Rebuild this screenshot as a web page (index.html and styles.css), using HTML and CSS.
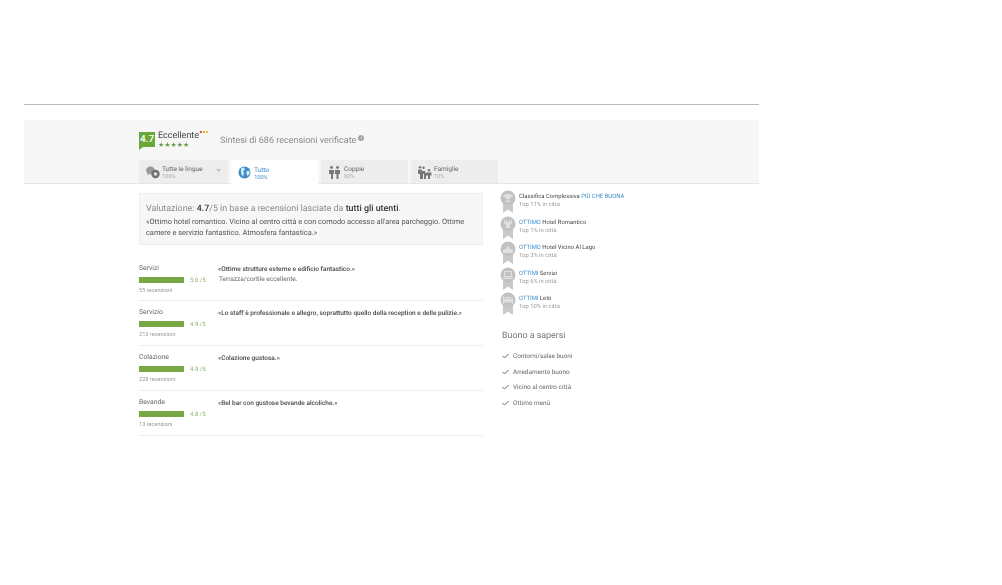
FILE: index.html
```html
<!DOCTYPE html>
<html lang="it">
<head>
    <meta charset="UTF-8" />
    <title>Recensioni</title>
    <link rel="stylesheet" href="styles.css">
</head>
<body>
<svg class="defs" width="0" height="0">
    <symbol id="ribbon" viewBox="0 0 16 23">
        <path d="M3 11 L3 23 L8 19.500 L13 23 L13 11 Z" fill="#c9c9c9"/>
        <circle cx="8" cy="8" r="7.500" fill="#c2c2c2"/>
    </symbol>
    <symbol id="check" viewBox="0 0 7 6">
        <path d="M.5 3l2 2L6.500 1" fill="none" stroke="#666" stroke-width="1"/>
    </symbol>
</svg>
<div class="page">
    <div class="rule"></div>

    <div class="band">
        <div class="head">
            <div class="score">4.7</div>
            <div class="verdict">
                <div class="verdict-name">Eccellente<span class="dots"><i class="d1"></i><i class="d2"></i><i class="d3"></i></span></div>
                <div class="stars">★★★★★</div>
            </div>
            <div class="title">Sintesi di 686 recensioni verificate<span class="info">i</span></div>
        </div>
        <div class="tabs">
            <div class="tab tab-lang">
                <svg class="tab-icon" viewBox="0 0 14 13" width="14" height="13"><path d="M0 4.500a4.500 4 0 0 1 9 0a4.500 4 0 0 1-6 3.500L1 9.500l.5-2.500A4 4 0 0 1 0 4.500z" fill="#9a9a9a"/><circle cx="9.500" cy="8" r="4.200" fill="#707070"/><circle cx="9.500" cy="8" r="1.800" fill="#e2e2e2"/></svg>
                <div><div class="tab-name">Tutte le lingue</div><div class="tab-pct">100%</div></div>
                <span class="caret"></span>
            </div>
            <div class="tab tab-on">
                <svg class="tab-icon" viewBox="0 0 13 13" width="13" height="13"><circle cx="6.500" cy="6.500" r="6" fill="#3b8ecb"/><path d="M3 2.500l3-1 1 2-2 2 1 2-1 3-2-3zM8.500 5l3 0 0 3-2 2-1-2z" fill="#dcecf7"/></svg>
                <div><div class="tab-name">Tutto</div><div class="tab-pct">100%</div></div>
            </div>
            <div class="tab tab-couple">
                <svg class="tab-icon" viewBox="0 0 11 13" width="11" height="13"><circle cx="2.500" cy="1.500" r="1.400" fill="#777"/><circle cx="8.500" cy="1.500" r="1.400" fill="#777"/><path d="M0 4h5v4H4v5H2V8H0zM6 4h5v4H9.500v5h-2V8H6z" fill="#777"/></svg>
                <div><div class="tab-name">Coppie</div><div class="tab-pct">82%</div></div>
            </div>
            <div class="tab tab-family">
                <svg class="tab-icon" viewBox="0 0 14 13" width="14" height="13"><circle cx="2" cy="1.200" r="1.200" fill="#777"/><circle cx="5.500" cy="1.800" r="1.200" fill="#777"/><circle cx="11" cy="4.200" r="1.300" fill="#777"/><path d="M0 3.500h4v1.500h3v1.500h6.500v3H12V13h-2V9.500H8V13H6V8H5v5H2V8H0z" fill="#777"/></svg>
                <div><div class="tab-name">Famiglie</div><div class="tab-pct">10%</div></div>
            </div>
        </div>
    </div>

    <div class="content">
        <div class="main">
            <div class="summary">
                <div class="summary-head">Valutazione: <b>4.7</b>/5 in base a recensioni lasciate da <b>tutti gli utenti</b>.</div>
                <div class="summary-text">«Ottimo hotel romantico. Vicino al centro città e con comodo accesso all'area parcheggio. Ottime camere e servizio fantastico. Atmosfera fantastica.»</div>
            </div>

            <div class="row">
                <div class="row-left">
                    <div class="row-label">Servizi</div>
                    <div class="row-meter"><span class="bar"></span><span class="val">5.0 /5</span></div>
                    <div class="row-count">55 recensioni</div>
                </div>
                <div class="row-quote"><div class="strong">«Ottime strutture esterne e edificio fantastico.»</div><div class="extra">Terrazza/cortile eccellente.</div></div>
            </div>
            <div class="row">
                <div class="row-left">
                    <div class="row-label">Servizio</div>
                    <div class="row-meter"><span class="bar"></span><span class="val">4.9 /5</span></div>
                    <div class="row-count">213 recensioni</div>
                </div>
                <div class="row-quote"><div class="strong">«Lo staff è professionale e allegro, soprattutto quello della reception e delle pulizie.»</div></div>
            </div>
            <div class="row">
                <div class="row-left">
                    <div class="row-label">Colazione</div>
                    <div class="row-meter"><span class="bar"></span><span class="val">4.9 /5</span></div>
                    <div class="row-count">228 recensioni</div>
                </div>
                <div class="row-quote"><div class="strong">«Colazione gustosa.»</div></div>
            </div>
            <div class="row">
                <div class="row-left">
                    <div class="row-label">Bevande</div>
                    <div class="row-meter"><span class="bar"></span><span class="val">4.8 /5</span></div>
                    <div class="row-count">13 recensioni</div>
                </div>
                <div class="row-quote"><div class="strong">«Bel bar con gustose bevande alcoliche.»</div></div>
            </div>
        </div>

        <div class="side">
            <div class="badge">
                <svg class="ribbon" viewBox="0 0 16 23"><use href="#ribbon"/><path d="M5 4h6v1h1.500v2H11a3 3 0 0 1-2.500 2v1.500H10V12H6v-1.500h1.500V9A3 3 0 0 1 5 7H3.500V5H5z" fill="#e0e0e0"/></svg>
                <div><div class="badge-name">Classifica Complessiva <span class="blue">PIÙ CHE BUONA</span></div><div class="badge-top">Top 11% in città</div></div>
            </div>
            <div class="badge">
                <svg class="ribbon" viewBox="0 0 16 23"><use href="#ribbon"/><path d="M5 4v1.500l1 1V4h1v2h2V4h1v2.500l1-1V4h1v3l-2 2v3H6V9L4 7V4z" fill="#e0e0e0"/></svg>
                <div><div class="badge-name"><span class="blue">OTTIMO</span> Hotel Romantico</div><div class="badge-top">Top 1% in città</div></div>
            </div>
            <div class="badge">
                <svg class="ribbon" viewBox="0 0 16 23"><use href="#ribbon"/><path d="M3 12V9l3-1 2-3h1.500v3H12l1 1v3z" fill="#e0e0e0"/></svg>
                <div><div class="badge-name"><span class="blue">OTTIMO</span> Hotel Vicino Al Lago</div><div class="badge-top">Top 3% in città</div></div>
            </div>
            <div class="badge">
                <svg class="ribbon" viewBox="0 0 16 23"><use href="#ribbon"/><path d="M4 4h8v6H4zM5 5v4h6V5zM3 10.500h10V12H3z" fill="#e0e0e0"/></svg>
                <div><div class="badge-name"><span class="blue">OTTIMI</span> Servizi</div><div class="badge-top">Top 6% in città</div></div>
            </div>
            <div class="badge">
                <svg class="ribbon" viewBox="0 0 16 23"><use href="#ribbon"/><path d="M3 4h1v3h8V6h1v6h-1v-1.500H4V12H3zM5 5h6v1.500H5z" fill="#e0e0e0"/></svg>
                <div><div class="badge-name"><span class="blue">OTTIMI</span> Letti</div><div class="badge-top">Top 10% in città</div></div>
            </div>

            <div class="good">
                <h3>Buono a sapersi</h3>
                <div class="good-item"><svg width="7" height="6"><use href="#check"/></svg>Contorni/salse buoni</div>
                <div class="good-item"><svg width="7" height="6"><use href="#check"/></svg>Arredamento buono</div>
                <div class="good-item"><svg width="7" height="6"><use href="#check"/></svg>Vicino al centro città</div>
                <div class="good-item"><svg width="7" height="6"><use href="#check"/></svg>Ottimo menù</div>
            </div>
        </div>
    </div>
</div>
</body>
</html>
```

FILE: styles.css
```css
* {
    box-sizing: border-box;
}
body {
    margin: 0;
    background: #fff;
    font-family: Roboto, "Liberation Sans", sans-serif;
    color: #555;
    text-rendering: geometricPrecision;
}
.defs {
    position: absolute;
}
.page {
    width: 735px;
    margin-left: 24px;
    padding-top: 104px;
    filter: blur(.3px);
}
.rule {
    height: 1px;
    background: #b9b9b9;
}
.band {
    height: 64px;
    margin-top: 15px;
    padding: 11px 0 0 115px;
    background: #f7f7f7;
    border-bottom: 1px solid #e6e6e6;
}
.head {
    display: flex;
    align-items: flex-start;
    height: 29px;
}
.score {
    position: relative;
    width: 16px;
    height: 15px;
    margin-top: 1px;
    background: #6aa83c;
    color: #fff;
    font-size: 10px;
    font-weight: 500;
    line-height: 15px;
    text-align: center;
}
.score::after {
    content: "";
    position: absolute;
    left: 0;
    top: 15px;
    border-top: 3px solid #6aa83c;
    border-right: 4px solid transparent;
}
.verdict {
    margin: 0 0 0 3px;
    padding-top: 0;
    width: 62px;
}
.verdict-name {
    margin-top: 0;
    font-size: 9px;
    line-height: 9px;
    padding-top: 0;
    color: #444;
}
.dots {
    display: inline-flex;
    gap: 1px;
    margin-left: 1px;
    vertical-align: 5px;
}
.dots i {
    width: 2px;
    height: 2px;
}
.d1 { background: #d9534f; }
.d2 { background: #efa43a; }
.d3 { background: #e7c63a; }
.stars {
    color: #6a9a48;
    font-family: "DejaVu Sans", sans-serif;
    font-size: 7px;
    line-height: 8px;
}
.title {
    margin-top: 4px;
    font-size: 9px;
    line-height: 13px;
    color: #8a8a8a;
}
.info {
    display: inline-block;
    width: 6px;
    height: 6px;
    margin-left: 2px;
    border-radius: 50%;
    background: #a5a5a5;
    color: #fff;
    font-size: 5px;
    line-height: 6px;
    text-align: center;
    vertical-align: 4px;
}
.tabs {
    display: flex;
    gap: 3px;
}
.tab {
    display: flex;
    align-items: center;
    gap: 4px;
    position: relative;
    width: 87px;
    height: 23px;
    padding: 1px 0 0 8px;
    background: #ededed;
    font-size: 6.500px;
    line-height: 7px;
    color: #666;
}
.tab-lang {
    width: 89px;
    padding-left: 7px;
    gap: 2px;
}
.tab-on {
    height: 24px;
    padding-left: 7px;
    gap: 3px;
    background: #fff;
    color: #3b8ecb;
}
.tab-family {
    padding-left: 7px;
    gap: 2px;
}
.tab-name {
    margin-top: 3px;
}
.tab-pct {
    margin-top: 1px;
    font-size: 5.500px;
    color: #aaa;
}
.tab-on .tab-pct {
    color: #3b8ecb;
}
.caret {
    position: absolute;
    right: 8px;
    top: 8px;
    width: 3px;
    height: 3px;
    border-right: 1px solid #aaa;
    border-bottom: 1px solid #aaa;
    transform: rotate(45deg);
}
.content {
    display: flex;
    padding-left: 115px;
}
.main {
    width: 344px;
    margin-top: 9px;
}
.summary {
    height: 52px;
    padding: 9px 6px 0;
    background: #f7f7f7;
    border: 1px solid #eee;
}
.summary-head {
    font-size: 8.900px;
    line-height: 13px;
    color: #8a8a8a;
}
.summary-head b {
    color: #333;
    font-weight: 500;
}
.summary-text {
    font-size: 7.400px;
    line-height: 11px;
    color: #555;
}
.row {
    display: flex;
    height: 45px;
    padding-top: 7px;
    border-bottom: 1px solid #eee;
}
.summary + .row {
    height: 56px;
    padding-top: 19px;
}
.row-left {
    width: 79px;
}
.row-label {
    font-size: 6.800px;
    line-height: 9px;
    color: #666;
}
.row-meter {
    display: flex;
    align-items: center;
    height: 12px;
    margin-top: 1px;
}
.bar {
    width: 45px;
    height: 6px;
    background: #77a843;
}
.val {
    margin-left: 6px;
    font-size: 6px;
    color: #8db36a;
}
.row-count {
    margin-top: 1px;
    font-size: 5.600px;
    line-height: 8px;
    color: #999;
}
.row-quote {
    font-size: 6.500px;
    line-height: 10px;
}
.strong {
    color: #484848;
    font-weight: 500;
}
.extra {
    margin: 0 0 0 1px;
    color: #666;
}
.side {
    margin: 7px 0 0 17px;
    width: 200px;
}
.badge {
    display: flex;
    height: 25.500px;
    gap: 3px;
}
.ribbon {
    flex: none;
    width: 16px;
    height: 23px;
    margin-top: -1px;
}
.badge-name {
    margin-top: 2px;
    font-size: 5.900px;
    line-height: 8px;
    color: #444;
}
.blue {
    color: #3b8ecb;
}
.badge-top {
    font-size: 5.800px;
    line-height: 8px;
    color: #999;
}
.good {
    margin: 11px 0 0 2px;
}
.good h3 {
    margin: 0 0 6px;
    font-size: 8.900px;
    font-weight: 400;
    line-height: 13px;
    color: #777;
}
.good-item {
    display: flex;
    align-items: center;
    gap: 4px;
    height: 15.600px;
    font-size: 6.400px;
    color: #666;
}
```
